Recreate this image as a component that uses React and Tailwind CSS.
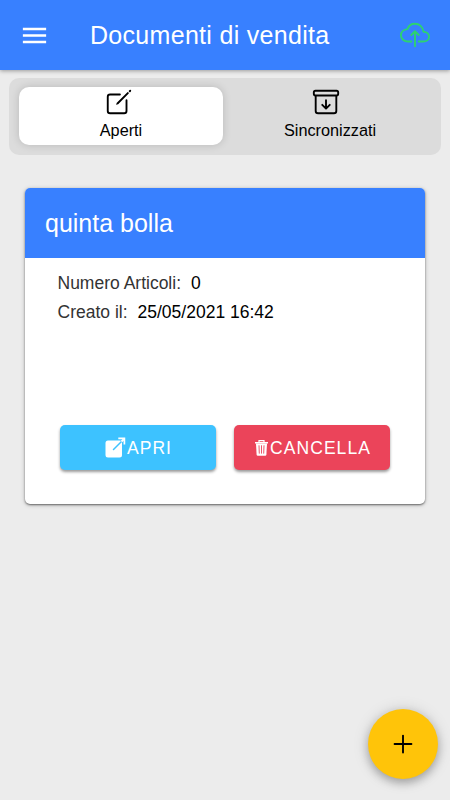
import React, { useState } from 'react';
import {
  IoAdd,
  IoArchiveOutline,
  IoCloudUploadOutline,
  IoCreateOutline,
  IoMenuSharp,
} from 'react-icons/io5';

const documents = [
  { id: 1, name: 'quinta bolla', items: 0, createdAt: '25/05/2021 16:42' },
];

const OpenIcon = () => (
  <svg viewBox="0 0 23 23" className="size-[23px]" fill="none">
    <rect x="1.5" y="4.5" width="16.5" height="17" rx="2.5" fill="currentColor" />
    <path d="M9.5 13.5 L17.5 5.5" stroke="#3dc2ff" strokeWidth="1.5" strokeLinecap="round" />
    <path d="M17.5 5.5 L19.8 3.2" stroke="currentColor" strokeWidth="2" />
    <path d="M14.3 2.3 H20.4 V8.4" stroke="currentColor" strokeWidth="1.7" />
  </svg>
);

const TrashIcon = () => (
  <svg viewBox="0 0 17 18" className="h-[18px] w-[17px]" fill="none">
    <path d="M6 3.5 V1.6 H11 V3.5" stroke="currentColor" strokeWidth="1.2" />
    <path d="M2 3 H15 V4.6 H2 Z" fill="currentColor" />
    <path d="M3 4.5 H14 L13.4 15.5 Q13.3 16.7 12.2 16.7 H4.8 Q3.7 16.7 3.6 15.5 Z" fill="currentColor" />
    <path d="M6 6.3 L6.3 14.6 M8.5 6.3 V14.6 M11 6.3 L10.7 14.6" stroke="#eb445a" strokeWidth="0.9" />
  </svg>
);

const Header = () => (
  <header className="relative flex h-[70px] shrink-0 items-center bg-[#3880ff] pl-[19px] pr-5 text-white shadow-[0_1px_4px_rgba(0,0,0,0.35)]">
    <button aria-label="Menu">
      <IoMenuSharp className="size-[31px]" />
    </button>
    <h1 className="ml-10 flex-1 whitespace-nowrap text-[25px] leading-[30px] tracking-[0.012em]">
      Documenti di vendita
    </h1>
    <button aria-label="Carica">
      <IoCloudUploadOutline className="size-[30px] text-[#2dd36f]" />
    </button>
  </header>
);

const Tab = ({ icon: Icon, iconClass, label, active, onClick }) => (
  <button
    onClick={onClick}
    className={`flex h-[58px] flex-1 flex-col items-center rounded-[10px] text-[16.25px] leading-[20px] text-black ${
      active ? 'bg-white shadow-[0_0_8px_rgba(0,0,0,0.16)]' : ''
    }`}
  >
    <Icon className={`size-[30px] ${iconClass}`} />
    <span className="mt-[3px]">{label}</span>
  </button>
);

const DocumentCard = ({ doc }) => (
  <article className="mx-[25px] mt-[33px] flex h-[316px] flex-col overflow-hidden rounded-[5px] bg-white shadow-[0_1px_2px_rgba(0,0,0,0.5),0_1px_5px_rgba(0,0,0,0.2)]">
    <h2 className="flex h-[70px] items-center bg-[#3880ff] px-5 pt-0.5 text-[25px] text-white">
      {doc.name}
    </h2>
    <div className="flex-1 pl-[32.5px] pt-[11px] text-[17.5px] leading-[29px] text-black">
      <p>
        <span className="mr-[10px] text-[#333333]">Numero Articoli:</span>
        {doc.items}
      </p>
      <p>
        <span className="mr-[10px] text-[#333333]">Creato il:</span>
        {doc.createdAt}
      </p>
    </div>
    <div className="mb-[34px] flex gap-[18px] px-[35px] text-[17.5px] tracking-[0.06em] text-white">
      <button className="flex h-[45px] flex-1 items-center justify-center rounded-[5px] bg-[#3dc2ff] shadow-[0_2px_3px_rgba(0,0,0,0.4)]">
        <OpenIcon />
        <span className="pt-px">APRI</span>
      </button>
      <button className="flex h-[45px] flex-1 items-center justify-center rounded-[5px] bg-[#eb445a] shadow-[0_2px_3px_rgba(0,0,0,0.4)]">
        <TrashIcon />
        <span className="pt-px">CANCELLA</span>
      </button>
    </div>
  </article>
);

const App = () => {
  const [tab, setTab] = useState('open');

  return (
    <div className="relative flex h-screen w-full flex-col overflow-hidden bg-[#ececec] font-['Liberation_Sans',Arial,sans-serif]">
      <Header />
      <nav className="mx-[9px] mt-2 flex h-[77px] shrink-0 gap-[5px] rounded-[10px] bg-[#dcdcdc] pl-[10px] pr-[9px] pt-[9px]">
        <Tab
          icon={IoCreateOutline}
          iconClass="mr-1"
          label="Aperti"
          active={tab === 'open'}
          onClick={() => setTab('open')}
        />
        <Tab
          icon={IoArchiveOutline}
          iconClass="mr-2"
          label="Sincronizzati"
          active={tab === 'synced'}
          onClick={() => setTab('synced')}
        />
      </nav>
      <main>
        {tab === 'open' && documents.map((doc) => <DocumentCard key={doc.id} doc={doc} />)}
      </main>
      <button
        aria-label="Nuovo documento"
        className="absolute bottom-[21px] right-[12.5px] flex size-[70px] items-center justify-center rounded-full bg-[#ffc409] text-black shadow-[0_4px_8px_rgba(0,0,0,0.25),0_1px_16px_rgba(0,0,0,0.15)]"
      >
        <IoAdd className="size-[30px]" />
      </button>
    </div>
  );
};

export default App;
